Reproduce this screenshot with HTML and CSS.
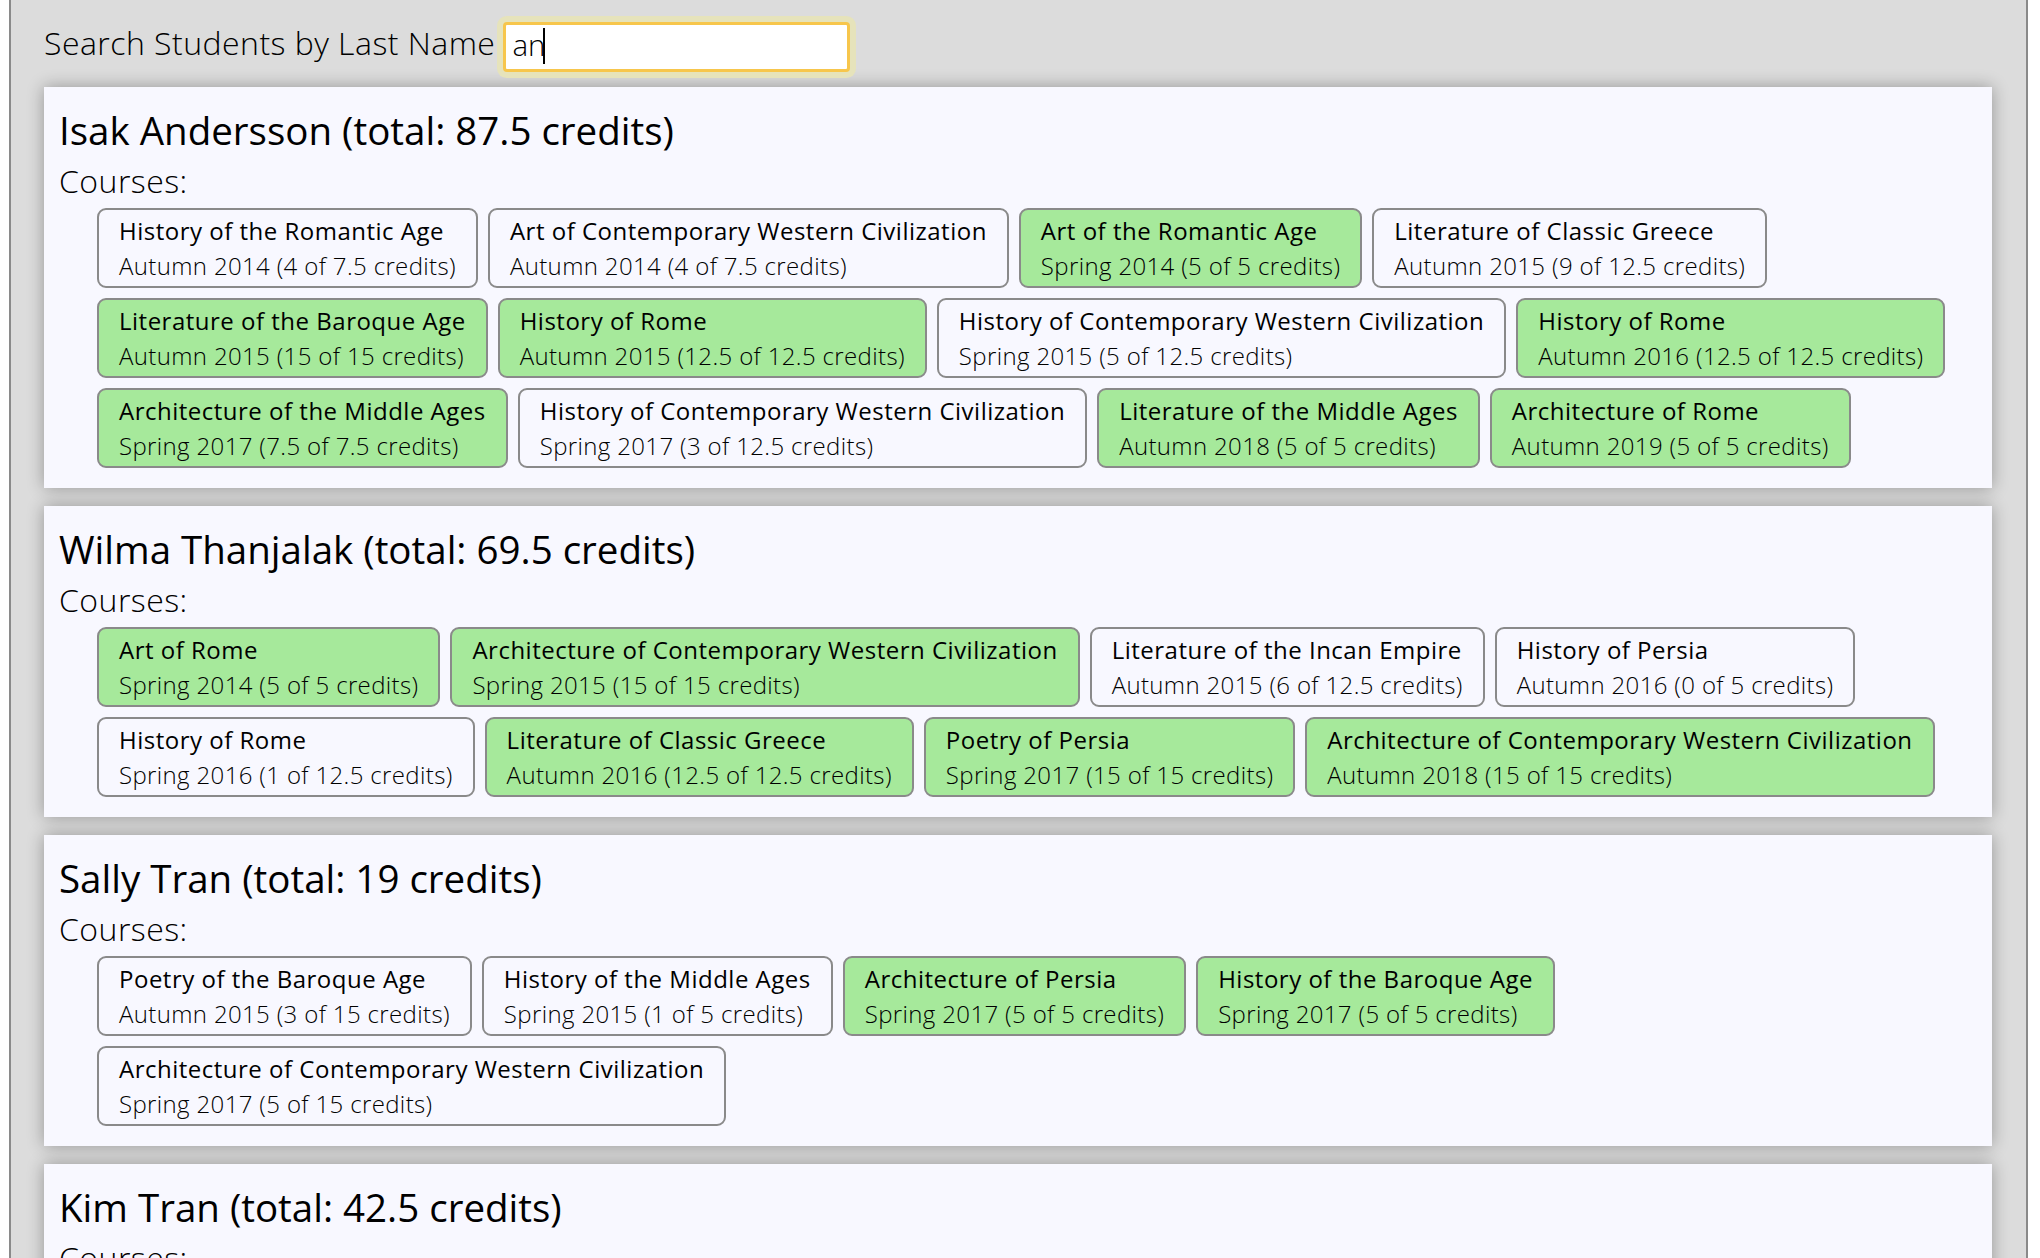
FILE: index.html
```html
<!DOCTYPE html>
<html lang="en">
<head>
<meta charset="utf-8">
<title>Students</title>
<link rel="stylesheet" href="styles.css">
</head>
<body>
<div class="app">
  <div class="search">
    <label for="q" class="search-label">Search Students by Last Name</label>
    <span class="input-wrap">
      <input id="q" class="search-input" type="text" value="an">
      <span class="caret"></span>
    </span>
  </div>

  <section class="card">
    <h2 class="student-name">Isak Andersson (total: 87.5 credits)</h2>
    <div class="courses-label">Courses:</div>
    <ul class="course-list">
      <li class="course"><span class="course-title">History of the Romantic Age</span><span class="course-term">Autumn 2014 (4 of 7.5 credits)</span></li>
      <li class="course"><span class="course-title">Art of Contemporary Western Civilization</span><span class="course-term">Autumn 2014 (4 of 7.5 credits)</span></li>
      <li class="course done"><span class="course-title">Art of the Romantic Age</span><span class="course-term">Spring 2014 (5 of 5 credits)</span></li>
      <li class="course"><span class="course-title">Literature of Classic Greece</span><span class="course-term">Autumn 2015 (9 of 12.5 credits)</span></li>
      <li class="course done"><span class="course-title">Literature of the Baroque Age</span><span class="course-term">Autumn 2015 (15 of 15 credits)</span></li>
      <li class="course done"><span class="course-title">History of Rome</span><span class="course-term">Autumn 2015 (12.5 of 12.5 credits)</span></li>
      <li class="course"><span class="course-title">History of Contemporary Western Civilization</span><span class="course-term">Spring 2015 (5 of 12.5 credits)</span></li>
      <li class="course done"><span class="course-title">History of Rome</span><span class="course-term">Autumn 2016 (12.5 of 12.5 credits)</span></li>
      <li class="course done"><span class="course-title">Architecture of the Middle Ages</span><span class="course-term">Spring 2017 (7.5 of 7.5 credits)</span></li>
      <li class="course"><span class="course-title">History of Contemporary Western Civilization</span><span class="course-term">Spring 2017 (3 of 12.5 credits)</span></li>
      <li class="course done"><span class="course-title">Literature of the Middle Ages</span><span class="course-term">Autumn 2018 (5 of 5 credits)</span></li>
      <li class="course done"><span class="course-title">Architecture of Rome</span><span class="course-term">Autumn 2019 (5 of 5 credits)</span></li>
    </ul>
  </section>

  <section class="card">
    <h2 class="student-name">Wilma Thanjalak (total: 69.5 credits)</h2>
    <div class="courses-label">Courses:</div>
    <ul class="course-list">
      <li class="course done"><span class="course-title">Art of Rome</span><span class="course-term">Spring 2014 (5 of 5 credits)</span></li>
      <li class="course done"><span class="course-title">Architecture of Contemporary Western Civilization</span><span class="course-term">Spring 2015 (15 of 15 credits)</span></li>
      <li class="course"><span class="course-title">Literature of the Incan Empire</span><span class="course-term">Autumn 2015 (6 of 12.5 credits)</span></li>
      <li class="course"><span class="course-title">History of Persia</span><span class="course-term">Autumn 2016 (0 of 5 credits)</span></li>
      <li class="course"><span class="course-title">History of Rome</span><span class="course-term">Spring 2016 (1 of 12.5 credits)</span></li>
      <li class="course done"><span class="course-title">Literature of Classic Greece</span><span class="course-term">Autumn 2016 (12.5 of 12.5 credits)</span></li>
      <li class="course done"><span class="course-title">Poetry of Persia</span><span class="course-term">Spring 2017 (15 of 15 credits)</span></li>
      <li class="course done"><span class="course-title">Architecture of Contemporary Western Civilization</span><span class="course-term">Autumn 2018 (15 of 15 credits)</span></li>
    </ul>
  </section>

  <section class="card">
    <h2 class="student-name">Sally Tran (total: 19 credits)</h2>
    <div class="courses-label">Courses:</div>
    <ul class="course-list">
      <li class="course"><span class="course-title">Poetry of the Baroque Age</span><span class="course-term">Autumn 2015 (3 of 15 credits)</span></li>
      <li class="course"><span class="course-title">History of the Middle Ages</span><span class="course-term">Spring 2015 (1 of 5 credits)</span></li>
      <li class="course done"><span class="course-title">Architecture of Persia</span><span class="course-term">Spring 2017 (5 of 5 credits)</span></li>
      <li class="course done"><span class="course-title">History of the Baroque Age</span><span class="course-term">Spring 2017 (5 of 5 credits)</span></li>
      <li class="course"><span class="course-title">Architecture of Contemporary Western Civilization</span><span class="course-term">Spring 2017 (5 of 15 credits)</span></li>
    </ul>
  </section>

  <section class="card">
    <h2 class="student-name">Kim Tran (total: 42.5 credits)</h2>
    <div class="courses-label">Courses:</div>
    <ul class="course-list"></ul>
  </section>
</div>
</body>
</html>
```
FILE: styles.css
```css
html, body {
  margin: 0;
  background: #ffffff;
}

body {
  font-family: "Open Sans", "DejaVu Sans", sans-serif;
  color: #000000;
}

.app {
  margin: 0 12px 0 9px;
  border-left: 2px solid #8a8a8a;
  border-right: 2px solid #8a8a8a;
  background: #dcdcdc;
  padding: 22px 34px 20px 33px;
  min-height: 1300px;
  box-sizing: border-box;
}

.search {
  display: flex;
  align-items: flex-start;
  margin-bottom: 15px;
}

.search-label {
  font-size: 32px;
  font-weight: 300;
  letter-spacing: 0.46px;
  line-height: 42px;
}

.input-wrap {
  position: relative;
  display: block;
  margin-left: 8px;
}

.search-input {
  display: block;
  width: 347px;
  height: 50px;
  box-sizing: border-box;
  border: 3px solid #f7c64c;
  border-radius: 4px;
  box-shadow: 0 0 0 6px #e6e3bb;
  background: #ffffff;
  font-family: "Open Sans", "DejaVu Sans", sans-serif;
  font-size: 29.5px;
  font-weight: 300;
  color: #000000;
  padding: 0 6px 5px 6px;
  outline: none;
  caret-color: transparent;
}

.caret {
  position: absolute;
  left: 40px;
  top: 6px;
  width: 2px;
  height: 36px;
  background: #000000;
}

.card {
  background: #f8f8ff;
  box-shadow: 0 0 16px rgba(0, 0, 0, 0.32);
  padding: 15px;
  margin-bottom: 18px;
}

.student-name {
  margin: 0;
  font-size: 38.5px;
  font-weight: 400;
  line-height: 56px;
}

.courses-label {
  font-size: 32px;
  font-weight: 300;
  letter-spacing: 0.46px;
  line-height: 45px;
}

.course-list {
  list-style: none;
  margin: 0;
  padding: 0 0 0 33px;
  display: flex;
  flex-wrap: wrap;
}

.course {
  margin: 5px;
  border: 2px solid #8a8a8a;
  border-radius: 9px;
  padding: 3px 20px;
  font-size: 24px;
  line-height: 35px;
}

.course.done {
  background: #a6e99b;
}

.course-title {
  display: block;
  font-weight: 400;
  letter-spacing: 0.5px;
}

.course-term {
  display: block;
  font-weight: 300;
  letter-spacing: 0.36px;
}
```
